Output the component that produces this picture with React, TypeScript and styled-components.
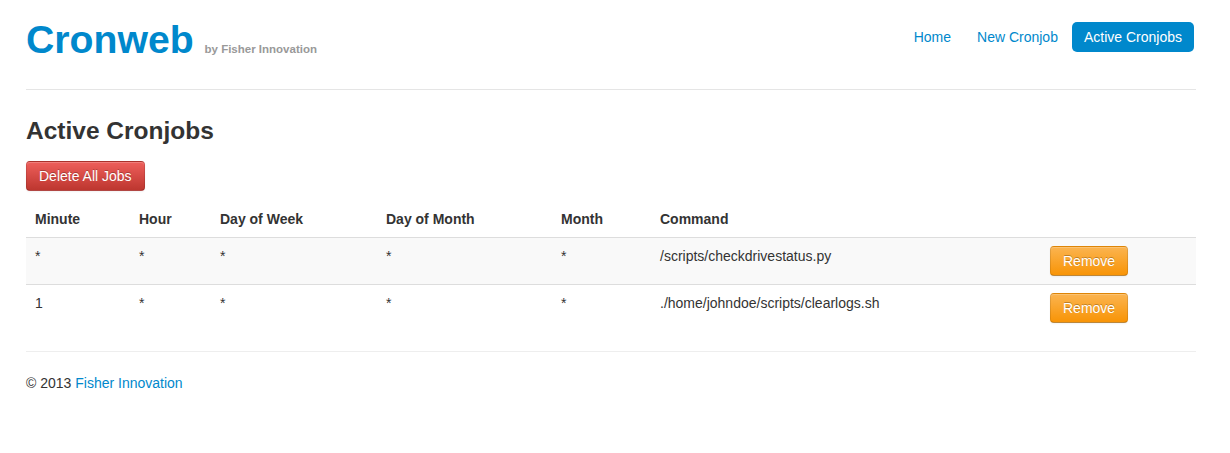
import React from "react";
import styled, { createGlobalStyle } from "styled-components";

const GlobalStyle = createGlobalStyle`
  html, body {
    margin: 0;
    padding: 0;
    background: #ffffff;
  }
  body {
    font-family: "Liberation Sans", Arial, Helvetica, sans-serif;
    font-size: 14px;
    line-height: 20px;
    color: #333333;
  }
`;

const Wrapper = styled.div`
  width: 1170px;
  margin-left: 26px;
`;

const Masthead = styled.header`
  display: flex;
  justify-content: space-between;
  align-items: flex-start;
  padding: 20px 0 29px;
  border-bottom: 1px solid #e5e5e5;
`;

const Brand = styled.h1`
  margin: 0;
  height: 40px;
  font-size: 39.2px;
  line-height: 40px;
  font-weight: bold;
  color: #0088cc;
`;

const Tagline = styled.small`
  font-size: 11.5px;
  line-height: 1;
  font-weight: bold;
  color: #999999;
`;

const Pills = styled.ul`
  display: flex;
  list-style: none;
  margin: 2px 0 0;
  padding: 0;
`;

const PillItem = styled.li`
  margin-right: 2px;
`;

const PillLink = styled.a<{ $active?: boolean }>`
  display: block;
  padding: 8px 12px;
  line-height: 14px;
  border-radius: 5px;
  text-decoration: none;
  color: ${(p) => (p.$active ? "#ffffff" : "#0088cc")};
  background: ${(p) => (p.$active ? "#0088cc" : "transparent")};
  cursor: pointer;
`;

const Main = styled.main`
  padding-top: 21px;
`;

const Title = styled.h3`
  margin: 0 0 10px;
  font-size: 24.5px;
  line-height: 40px;
  font-weight: bold;
  color: #333333;
`;

const Button = styled.button<{ $variant: "danger" | "warning" }>`
  display: inline-block;
  padding: 4px 12px;
  font-family: "Liberation Sans", Arial, Helvetica, sans-serif;
  font-size: 14px;
  line-height: 20px;
  color: #ffffff;
  text-shadow: 0 -1px 0 rgba(0, 0, 0, 0.25);
  background-color: ${(p) => (p.$variant === "danger" ? "#da4f49" : "#faa732")};
  background-image: ${(p) =>
    p.$variant === "danger"
      ? "linear-gradient(to bottom, #ee5f5b, #bd362f)"
      : "linear-gradient(to bottom, #fbb450, #f89406)"};
  border: 1px solid;
  border-color: rgba(0, 0, 0, 0.1) rgba(0, 0, 0, 0.1) rgba(0, 0, 0, 0.25);
  border-radius: 4px;
  box-shadow: inset 0 1px 0 rgba(255, 255, 255, 0.2), 0 1px 2px rgba(0, 0, 0, 0.05);
  cursor: pointer;
  vertical-align: middle;
`;

const Table = styled.table`
  width: 100%;
  margin: 10px 0 20px;
  border-collapse: collapse;
  border-spacing: 0;
  table-layout: fixed;
`;

const Th = styled.th<{ $w: number }>`
  width: ${(p) => p.$w}px;
  padding: 8px 8px 8px 9px;
  line-height: 20px;
  text-align: left;
  font-weight: bold;
  vertical-align: bottom;
  box-sizing: border-box;
`;

const Row = styled.tr<{ $striped?: boolean }>`
  background: ${(p) => (p.$striped ? "#f9f9f9" : "transparent")};
`;

const Td = styled.td`
  padding: 8px 8px 8px 9px;
  line-height: 20px;
  text-align: left;
  vertical-align: top;
  border-top: 1px solid #dddddd;
`;

const Rule = styled.hr`
  margin: 0;
  border: 0;
  border-top: 1px solid #eeeeee;
  border-bottom: 1px solid #ffffff;
`;

const Footer = styled.footer`
  padding-top: 20px;
`;

const FooterText = styled.p`
  margin: 0;
`;

const Link = styled.a`
  color: #0088cc;
  text-decoration: none;
`;

const columns = [
  { label: "Minute", w: 104 },
  { label: "Hour", w: 81 },
  { label: "Day of Week", w: 166 },
  { label: "Day of Month", w: 175 },
  { label: "Month", w: 99 },
  { label: "Command", w: 390 },
  { label: "", w: 155 },
];

const jobs = [
  { minute: "*", hour: "*", dow: "*", dom: "*", month: "*", command: "/scripts/checkdrivestatus.py" },
  { minute: "1", hour: "*", dow: "*", dom: "*", month: "*", command: "./home/johndoe/scripts/clearlogs.sh" },
];

export default function App() {
  return (
    <>
      <GlobalStyle />
      <Wrapper>
        <Masthead>
          <Brand>
            Cronweb <Tagline>by Fisher Innovation</Tagline>
          </Brand>
          <Pills>
            <PillItem>
              <PillLink>Home</PillLink>
            </PillItem>
            <PillItem>
              <PillLink>New Cronjob</PillLink>
            </PillItem>
            <PillItem>
              <PillLink $active>Active Cronjobs</PillLink>
            </PillItem>
          </Pills>
        </Masthead>
        <Main>
          <Title>Active Cronjobs</Title>
          <Button $variant="danger">Delete All Jobs</Button>
          <Table>
            <thead>
              <tr>
                {columns.map((c, i) => (
                  <Th key={i} $w={c.w}>
                    {c.label}
                  </Th>
                ))}
              </tr>
            </thead>
            <tbody>
              {jobs.map((j, i) => (
                <Row key={i} $striped={i % 2 === 0}>
                  <Td>{j.minute}</Td>
                  <Td>{j.hour}</Td>
                  <Td>{j.dow}</Td>
                  <Td>{j.dom}</Td>
                  <Td>{j.month}</Td>
                  <Td>{j.command}</Td>
                  <Td>
                    <Button $variant="warning">Remove</Button>
                  </Td>
                </Row>
              ))}
            </tbody>
          </Table>
        </Main>
        <Rule />
        <Footer>
          <FooterText>
            © 2013 <Link>Fisher Innovation</Link>
          </FooterText>
        </Footer>
      </Wrapper>
    </>
  );
}
